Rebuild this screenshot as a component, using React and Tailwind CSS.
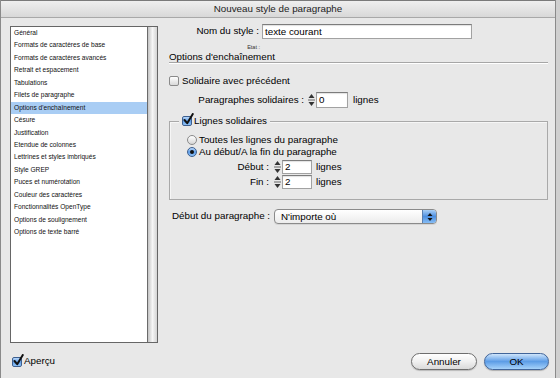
import React from 'react';

const SECTIONS = [
  'Général',
  'Formats de caractères de base',
  'Formats de caractères avancés',
  'Retrait et espacement',
  'Tabulations',
  'Filets de paragraphe',
  "Options d'enchaînement",
  'Césure',
  'Justification',
  'Etendue de colonnes',
  'Lettrines et styles imbriqués',
  'Style GREP',
  'Puces et numérotation',
  'Couleur des caractères',
  'Fonctionnalités OpenType',
  'Options de soulignement',
  'Options de texte barré',
];

function CheckBox({ checked }) {
  return (
    <span
      className={`relative inline-block w-[10px] h-[10px] shrink-0 rounded-[2px] border ${
        checked
          ? 'border-[#3d5f8f] bg-gradient-to-b from-[#b9d8fa] via-[#5f9ee8] to-[#8fc2f6]'
          : 'border-[#8a8a8a] bg-gradient-to-b from-white to-[#d9d9d9]'
      }`}
    >
      {checked && (
        <svg className="absolute -top-[4px] left-[0px] w-[11px] h-[12px]" viewBox="0 0 11 12">
          <path d="M1.5 7 L4.2 10.2 L9.8 1" fill="none" stroke="#111" strokeWidth="2" strokeLinecap="round" strokeLinejoin="round" />
        </svg>
      )}
    </span>
  );
}

function Radio({ checked }) {
  return (
    <span
      className={`inline-flex items-center justify-center w-[10px] h-[10px] shrink-0 rounded-full border ${
        checked
          ? 'border-[#3d5f8f] bg-gradient-to-b from-[#b9d8fa] via-[#5f9ee8] to-[#8fc2f6]'
          : 'border-[#8a8a8a] bg-gradient-to-b from-white to-[#d6d6d6]'
      }`}
    >
      {checked && <span className="w-[4px] h-[4px] rounded-full bg-[#111]" />}
    </span>
  );
}

function Stepper({ h = 16 }) {
  return (
    <svg className="shrink-0" width="9" height={h} viewBox={`0 0 9 ${h}`}>
      <path d={`M4.5 ${h / 2 - 6} L7.5 ${h / 2 - 2} L1.5 ${h / 2 - 2} Z`} fill="#333" />
      <line x1="1" y1={h / 2} x2="8" y2={h / 2} stroke="#666" strokeWidth="1" />
      <path d={`M4.5 ${h / 2 + 6} L7.5 ${h / 2 + 2} L1.5 ${h / 2 + 2} Z`} fill="#333" />
    </svg>
  );
}

function Field({ value, w, h }) {
  return (
    <div
      className="flex items-center bg-white border border-[#a2a2a2] border-t-[#7c7c7c] shadow-[inset_0_1px_1px_rgba(0,0,0,0.12)] pl-[2px] leading-none"
      style={{ width: w, height: h }}
    >
      {value}
    </div>
  );
}

export default function App() {
  return (
    <div className="w-[560px] h-[378px] flex bg-[#e8e8e8] text-[9.8px] text-black font-['Liberation_Sans',Arial,sans-serif] overflow-hidden">
      <div className="w-[556px] h-full flex flex-col border-l border-r border-[#8a8a8a]">
        {/* barre de titre */}
        <div className="h-[18px] shrink-0 flex items-center justify-center border-t border-t-[#7a7a7a] border-b border-b-[#a8a8a8] bg-gradient-to-b from-[#efefef] to-[#d8d8d8] text-[#222]">
          Nouveau style de paragraphe
        </div>

        <div className="flex">
          {/* liste des sections */}
          <div className="ml-[9px] mt-[8px] w-[148px] h-[317px] flex border border-[#666] bg-white">
            <div className="flex-1 flex flex-col">
              {SECTIONS.map((s) => (
                <div
                  key={s}
                  className={`h-[12.44px] leading-[12.44px] pl-[3px] text-[6.6px] text-[#111] whitespace-nowrap ${
                    s === "Options d'enchaînement" ? 'bg-[#a9cdf4]' : ''
                  }`}
                >
                  {s}
                </div>
              ))}
            </div>
            <div className="w-[10px] border-l border-[#6a6a6a] bg-gradient-to-r from-[#c4c4c4] via-[#f6f6f6] to-[#d4d4d4]" />
          </div>

          {/* options */}
          <div className="ml-[11px] w-[379px] flex flex-col">
            <div className="mt-[6px] h-[15px] flex items-center">
              <div className="w-[90px] text-right">Nom du style :</div>
              <div className="ml-[3px]">
                <Field value="texte courant" w={210} h={15} />
              </div>
            </div>

            <div className="mt-[4px] h-[8px] flex items-center">
              <div className="w-[91px] text-right text-[5.5px] text-[#333]">Etat :</div>
            </div>

            <div className="h-[12px] leading-[12px] border-b border-[#a6a6a6] shadow-[0_1px_0_#fff]">
              Options d'enchaînement
            </div>

            <div className="mt-[12px] h-[12px] flex items-center gap-[3px]">
              <CheckBox />
              <span>Solidaire avec précédent</span>
            </div>

            <div className="mt-[5px] h-[16px] flex items-center">
              <div className="w-[135px] text-right">Paragraphes solidaires :</div>
              <div className="ml-[3px] flex items-center">
                <Stepper h={16} />
                <Field value="0" w={32} h={16} />
              </div>
              <span className="ml-[5px]">lignes</span>
            </div>

            {/* groupe lignes solidaires */}
            <div className="relative mt-[13px] h-[79px] border border-[#a9a9a9] shadow-[inset_1px_1px_0_#f6f6f6]">
              <div className="absolute -top-[7px] left-[9px] h-[12px] flex items-center gap-[2px] px-[3px] bg-[#e8e8e8]">
                <CheckBox checked />
                <span>Lignes solidaires</span>
              </div>

              <div className="pt-[12px] pl-[17px] flex flex-col">
                <div className="h-[12px] flex items-center gap-[2px]">
                  <Radio />
                  <span>Toutes les lignes du paragraphe</span>
                </div>
                <div className="h-[12px] flex items-center gap-[2px]">
                  <Radio checked />
                  <span>Au début/A la fin du paragraphe</span>
                </div>
              </div>

              <div className="mt-[2px] h-[14px] flex items-center">
                <div className="w-[99px] text-right">Début :</div>
                <div className="ml-[4px] flex items-center">
                  <Stepper h={14} />
                  <Field value="2" w={30} h={14} />
                </div>
                <span className="ml-[4px]">lignes</span>
              </div>
              <div className="mt-[1px] h-[14px] flex items-center">
                <div className="w-[99px] text-right">Fin :</div>
                <div className="ml-[4px] flex items-center">
                  <Stepper h={14} />
                  <Field value="2" w={30} h={14} />
                </div>
                <span className="ml-[4px]">lignes</span>
              </div>
            </div>

            <div className="mt-[9px] h-[15px] flex items-center">
              <div className="pl-[3px] w-[105px]">Début du paragraphe :</div>
              <div className="w-[163px] h-[15px] flex rounded-[4px] border border-[#8a8a8a] bg-gradient-to-b from-white to-[#ececec] overflow-hidden shadow-[0_1px_0_rgba(0,0,0,0.08)]">
                <span className="flex-1 flex items-center pl-[6px] leading-none">N'importe où</span>
                <span className="w-[14px] flex items-center justify-center border-l border-[#5a7fb0] bg-gradient-to-b from-[#a9cff6] via-[#4d8fe0] to-[#86bdf5]">
                  <svg width="6" height="10" viewBox="0 0 6 10">
                    <path d="M3 1 L5.5 4 L0.5 4 Z" fill="#111" />
                    <path d="M3 9 L5.5 6 L0.5 6 Z" fill="#111" />
                  </svg>
                </span>
              </div>
            </div>
          </div>
        </div>

        {/* bas de la fenêtre */}
        <div className="mt-[10px] h-[17px] flex items-center">
          <div className="pl-[11px] flex items-center gap-[2px]">
            <CheckBox checked />
            <span>Aperçu</span>
          </div>
          <div className="ml-auto mr-[6px] flex items-center gap-[7px]">
            <button className="w-[66px] h-[17px] rounded-full border border-[#6e6e6e] bg-gradient-to-b from-white via-[#f0f0f0] to-[#dadada] shadow-[0_1px_1px_rgba(0,0,0,0.2)] leading-none">
              Annuler
            </button>
            <button className="w-[65px] h-[17px] rounded-full border border-[#41659a] bg-gradient-to-b from-[#cfe5fb] via-[#5d9de6] to-[#a6d2fa] shadow-[0_1px_1px_rgba(0,0,0,0.25)] leading-none">
              OK
            </button>
          </div>
        </div>
      </div>
      <div className="w-[4px] h-full bg-[#cfcfcf]" />
    </div>
  );
}
